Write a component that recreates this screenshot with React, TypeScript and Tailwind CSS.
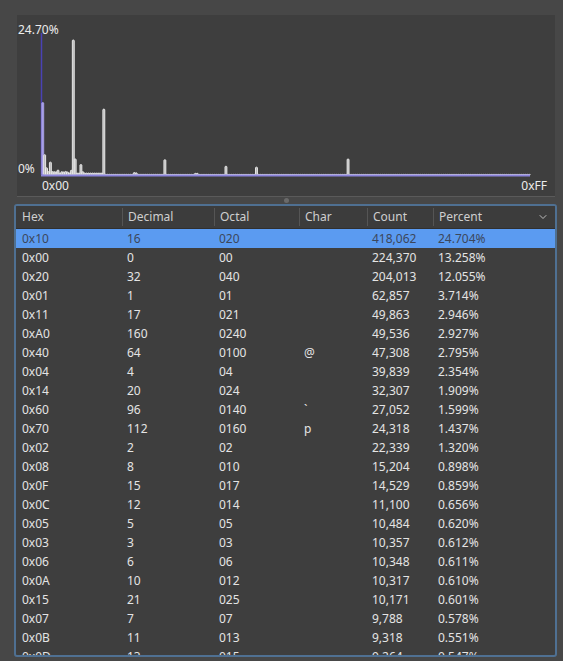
import { ChevronDown } from 'lucide-react';

interface Row {
  hex: string;
  dec: string;
  oct: string;
  ch: string;
  count: string;
  pct: string;
}

const rows: Row[] = [
  { hex: '0x10', dec: '16', oct: '020', ch: '', count: '418,062', pct: '24.704%' },
  { hex: '0x00', dec: '0', oct: '00', ch: '', count: '224,370', pct: '13.258%' },
  { hex: '0x20', dec: '32', oct: '040', ch: '', count: '204,013', pct: '12.055%' },
  { hex: '0x01', dec: '1', oct: '01', ch: '', count: '62,857', pct: '3.714%' },
  { hex: '0x11', dec: '17', oct: '021', ch: '', count: '49,863', pct: '2.946%' },
  { hex: '0xA0', dec: '160', oct: '0240', ch: '', count: '49,536', pct: '2.927%' },
  { hex: '0x40', dec: '64', oct: '0100', ch: '@', count: '47,308', pct: '2.795%' },
  { hex: '0x04', dec: '4', oct: '04', ch: '', count: '39,839', pct: '2.354%' },
  { hex: '0x14', dec: '20', oct: '024', ch: '', count: '32,307', pct: '1.909%' },
  { hex: '0x60', dec: '96', oct: '0140', ch: '`', count: '27,052', pct: '1.599%' },
  { hex: '0x70', dec: '112', oct: '0160', ch: 'p', count: '24,318', pct: '1.437%' },
  { hex: '0x02', dec: '2', oct: '02', ch: '', count: '22,339', pct: '1.320%' },
  { hex: '0x08', dec: '8', oct: '010', ch: '', count: '15,204', pct: '0.898%' },
  { hex: '0x0F', dec: '15', oct: '017', ch: '', count: '14,529', pct: '0.859%' },
  { hex: '0x0C', dec: '12', oct: '014', ch: '', count: '11,100', pct: '0.656%' },
  { hex: '0x05', dec: '5', oct: '05', ch: '', count: '10,484', pct: '0.620%' },
  { hex: '0x03', dec: '3', oct: '03', ch: '', count: '10,357', pct: '0.612%' },
  { hex: '0x06', dec: '6', oct: '06', ch: '', count: '10,348', pct: '0.611%' },
  { hex: '0x0A', dec: '10', oct: '012', ch: '', count: '10,317', pct: '0.610%' },
  { hex: '0x15', dec: '21', oct: '025', ch: '', count: '10,171', pct: '0.601%' },
  { hex: '0x07', dec: '7', oct: '07', ch: '', count: '9,788', pct: '0.578%' },
  { hex: '0x0B', dec: '11', oct: '013', ch: '', count: '9,318', pct: '0.551%' },
  { hex: '0x0D', dec: '13', oct: '015', ch: '', count: '9,264', pct: '0.547%' },
];

// percent per byte value; anything not listed gets a small floor
const bins: number[] = (() => {
  const b = new Array(256).fill(0).map((_, i) => (i < 0x40 ? 0.12 : i < 0x80 ? 0.04 : 0.02));
  rows.forEach((r) => {
    b[parseInt(r.hex, 16)] = parseFloat(r.pct);
  });
  [0x09, 0x0e, 0x12, 0x13, 0x16, 0x17, 0x18, 0x19, 0x1a, 0x1b, 0x1c, 0x1d, 0x1e, 0x1f].forEach((i) => {
    b[i] = 0.35;
  });
  b[0x30] = 0.45;
  b[0x31] = 0.4;
  b[0x50] = 0.3;
  b[0x51] = 0.3;
  return b;
})();

const AX_X = 24.5;
const AX_END = 513;
const BASE = 160;
const TOP = 25;
const MAX = 24.704;
const BW = (AX_END - AX_X) / 256;

function Histogram() {
  return (
    <svg width="538" height="181" className="absolute left-0 top-0">
      <line x1={AX_X} y1={18} x2={AX_X} y2={BASE} stroke="#4a42b4" strokeWidth="1.5" />
      {bins.map((v, i) => {
        const h = Math.max(((BASE - TOP) * v) / MAX, 0.6);
        const x = AX_X + i * BW;
        return (
          <rect
            key={i}
            x={x + 0.3}
            y={BASE - h}
            width={BW}
            height={h}
            rx={0.8}
            fill={i === 0 ? '#a79fe8' : '#b5b5b5'}
            stroke={i === 0 ? '#a79fe8' : '#f2f2f2'}
            strokeWidth="0.9"
          />
        );
      })}
      <line x1={AX_X - 0.5} y1={BASE + 0.5} x2={AX_END} y2={BASE + 0.5} stroke="#8c84dc" strokeWidth="2" />
    </svg>
  );
}

export default function App() {
  const cell = 'pl-[5px] whitespace-nowrap overflow-hidden';

  return (
    <div
      className="w-[563px] h-[661px] bg-[#474747] pt-[15px] overflow-hidden text-[12px] text-[#e4e4e4]"
      style={{ fontFamily: '"Noto Sans", "Open Sans", sans-serif' }}
    >
      <div className="ml-[17px] w-[538px] h-[182px] bg-[#3e3e3e] border-b border-[#5a5a5a] relative">
        <Histogram />
        <span className="absolute left-[1px] top-[7px] leading-[16px] text-[#ececec]">24.70%</span>
        <span className="absolute left-[1px] top-[146px] leading-[16px] text-[#ececec]">0%</span>
        <span className="absolute left-[25px] top-[163px] leading-[16px] text-[#ececec]">0x00</span>
        <span className="absolute right-[8px] top-[163px] leading-[16px] text-[#ececec]">0xFF</span>
      </div>

      <div className="ml-[17px] w-[538px] h-[7px] flex justify-center items-center">
        <div className="w-[5px] h-[5px] rounded-full bg-[#6a6a6a]" />
      </div>

      <div className="ml-[14px] w-[543px] h-[453px] border-2 border-[#4f7092] rounded-[3px] bg-[#3e3e3e] overflow-hidden">
        <div className="grid grid-cols-[106px_92px_85px_68px_66px_1fr] h-[23px] items-center border-b border-[#303030] bg-[#3c3c3c] text-[#cfcfcf]">
          <div className="pl-[6px]">Hex</div>
          <div className="pl-[5px] border-l border-[#555] leading-[18px]">Decimal</div>
          <div className="pl-[5px] border-l border-[#555] leading-[18px]">Octal</div>
          <div className="pl-[5px] border-l border-[#555] leading-[18px]">Char</div>
          <div className="pl-[5px] border-l border-[#555] leading-[18px]">Count</div>
          <div className="pl-[5px] border-l border-[#555] leading-[18px] flex items-center justify-between pr-[6px]">
            <span>Percent</span>
            <ChevronDown size={12} strokeWidth={2} className="text-[#bdbdbd]" />
          </div>
        </div>

        {rows.map((r, i) => (
          <div
            key={r.hex}
            className={`grid grid-cols-[106px_92px_85px_68px_66px_1fr] h-[19px] items-center ${
              i === 0 ? 'bg-[#5b9bf1] text-[#3b475c]' : ''
            }`}
          >
            <div className="pl-[6px]">{r.hex}</div>
            <div className={cell}>{r.dec}</div>
            <div className={cell}>{r.oct}</div>
            <div className={cell}>{r.ch}</div>
            <div className={cell}>{r.count}</div>
            <div className={cell}>{r.pct}</div>
          </div>
        ))}
      </div>
    </div>
  );
}
